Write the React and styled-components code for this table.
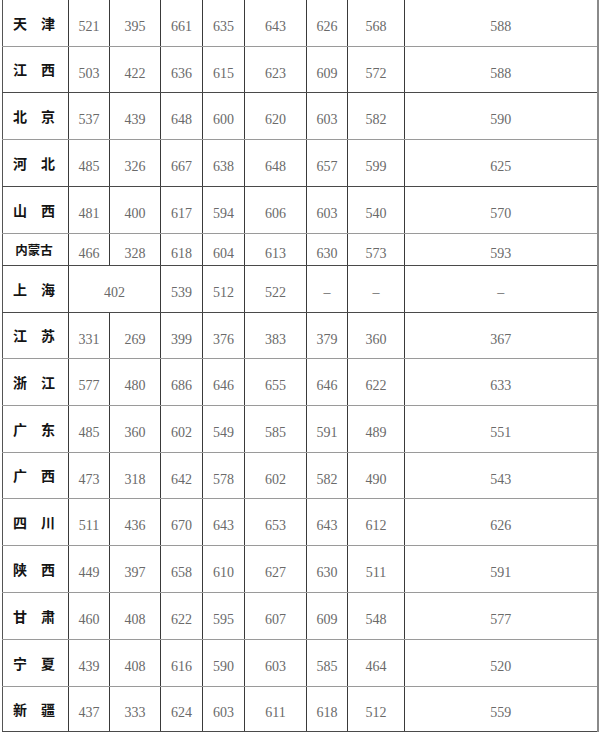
import React from "react";
import styled, { createGlobalStyle } from "styled-components";

const Global = createGlobalStyle`
  html, body { margin: 0; padding: 0; background: #fff; }
  body { width: 600px; height: 734px; overflow: hidden; }
`;

const Page = styled.div`
  width: 600px;
  height: 734px;
  padding-left: 2px;
  box-sizing: border-box;
  background: #fff;
`;

const Table = styled.table`
  border-collapse: collapse;
  table-layout: fixed;
  width: 595px;
  border-left: 1px solid #555;
  border-right: 2px solid #8a8a8a;
`;

const Row = styled.tr`
  height: ${(p) => p.$h}px;
  & > td {
    border-bottom: 1px solid ${(p) => (p.$dark ? "#4a4a4a" : "#9a9a9a")};
  }
`;

const Cell = styled.td`
  border-left: 1px solid #3a3a3a;
  padding: 0;
  text-align: center;
  vertical-align: middle;
  overflow: hidden;
  white-space: nowrap;
`;

const NameCell = styled(Cell)`
  border-left: none;
  font-family: "Noto Sans CJK SC", "Noto Sans", sans-serif;
  font-weight: 700;
  color: #141414;
  font-size: ${(p) => (p.$small ? 12.5 : 14)}px;
  padding-right: 3px;
`;

const NumCell = styled(Cell)`
  font-family: "Liberation Serif", "DejaVu Serif", serif;
  font-size: 14px;
  color: #6a6a6a;
  padding-top: 9px;
`;

const widths = [66, 41, 51, 42, 42, 62, 41, 57, 193];

const rows = [
  { n: "天　津", h: 46, d: false, v: ["521", "395", "661", "635", "643", "626", "568", "588"] },
  { n: "江　西", h: 46, d: true, v: ["503", "422", "636", "615", "623", "609", "572", "588"] },
  { n: "北　京", h: 47, d: false, v: ["537", "439", "648", "600", "620", "603", "582", "590"] },
  { n: "河　北", h: 47, d: true, v: ["485", "326", "667", "638", "648", "657", "599", "625"] },
  { n: "山　西", h: 47, d: false, v: ["481", "400", "617", "594", "606", "603", "540", "570"] },
  { n: "内蒙古", h: 32, d: true, small: true, v: ["466", "328", "618", "604", "613", "630", "573", "593"] },
  { n: "上　海", h: 47, d: true, span: true, v: ["402", "539", "512", "522", "–", "–", "–"] },
  { n: "江　苏", h: 46, d: false, v: ["331", "269", "399", "376", "383", "379", "360", "367"] },
  { n: "浙　江", h: 47, d: false, v: ["577", "480", "686", "646", "655", "646", "622", "633"] },
  { n: "广　东", h: 47, d: false, v: ["485", "360", "602", "549", "585", "591", "489", "551"] },
  { n: "广　西", h: 46, d: false, v: ["473", "318", "642", "578", "602", "582", "490", "543"] },
  { n: "四　川", h: 47, d: false, v: ["511", "436", "670", "643", "653", "643", "612", "626"] },
  { n: "陕　西", h: 47, d: false, v: ["449", "397", "658", "610", "627", "630", "511", "591"] },
  { n: "甘　肃", h: 47, d: false, v: ["460", "408", "622", "595", "607", "609", "548", "577"] },
  { n: "宁　夏", h: 47, d: false, v: ["439", "408", "616", "590", "603", "585", "464", "520"] },
  { n: "新　疆", h: 45, d: true, v: ["437", "333", "624", "603", "611", "618", "512", "559"] },
];

export default function App() {
  return (
    <Page>
      <Global />
      <Table>
        <colgroup>
          {widths.map((w, i) => (
            <col key={i} style={{ width: w }} />
          ))}
        </colgroup>
        <tbody>
          {rows.map((r) => (
            <Row key={r.n} $h={r.h} $dark={r.d}>
              <NameCell $small={r.small}>{r.n}</NameCell>
              {r.v.map((x, i) =>
                r.span && i === 0 ? (
                  <NumCell key={i} colSpan={2}>
                    {x}
                  </NumCell>
                ) : (
                  <NumCell key={i}>{x}</NumCell>
                )
              )}
            </Row>
          ))}
        </tbody>
      </Table>
    </Page>
  );
}
